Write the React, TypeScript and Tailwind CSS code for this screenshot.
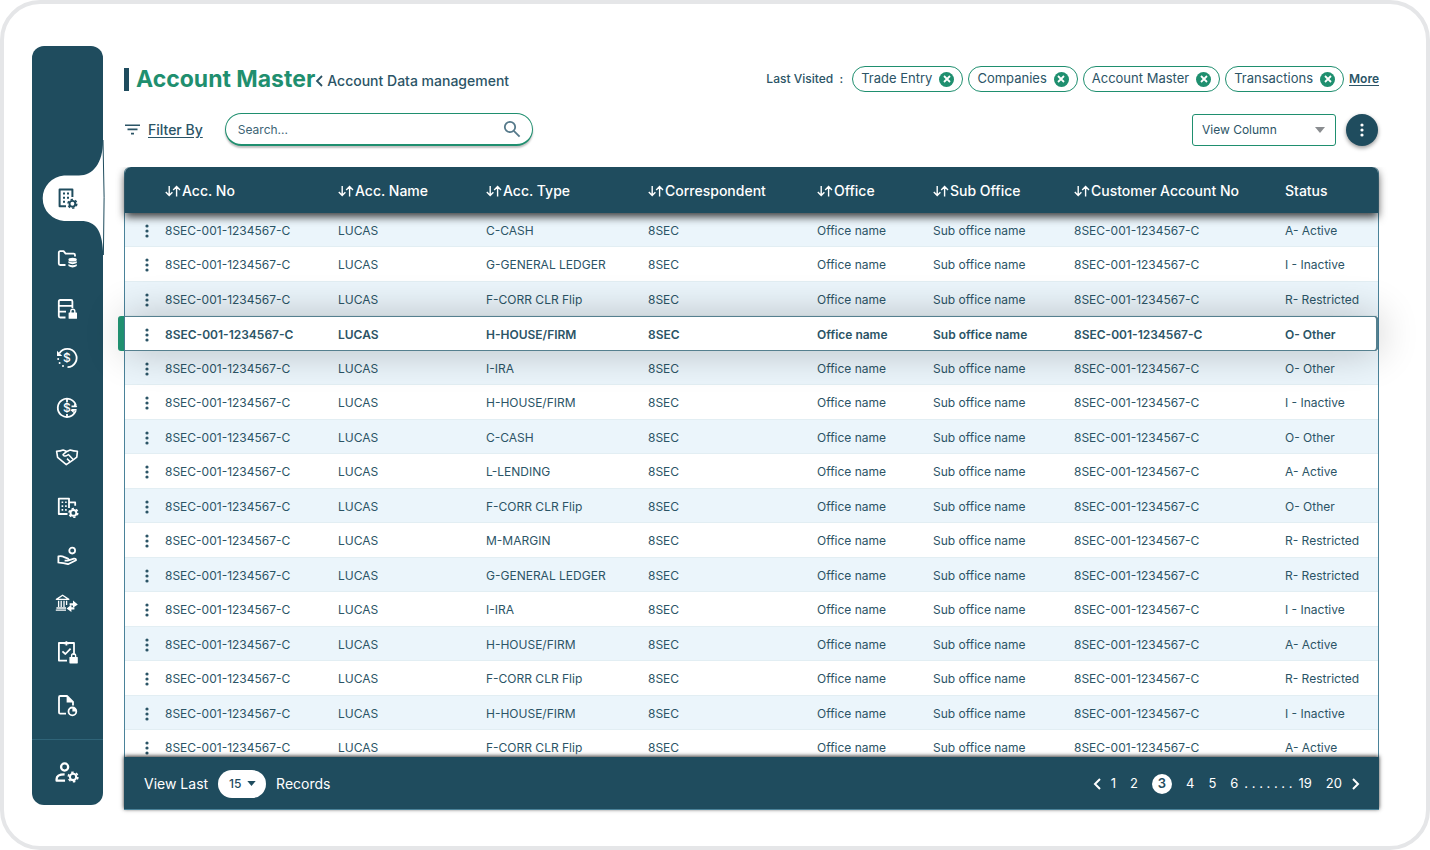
import { FC, ReactNode } from "react";
import clsx from "clsx";

interface IconProps {
  children: ReactNode;
  className?: string;
}

interface Account {
  type: string;
  status: string;
  selected?: boolean;
}

const accounts: Account[] = [
  { type: "C-CASH", status: "A- Active" },
  { type: "G-GENERAL LEDGER", status: "I - Inactive" },
  { type: "F-CORR CLR Flip", status: "R- Restricted" },
  { type: "H-HOUSE/FIRM", status: "O- Other", selected: true },
  { type: "I-IRA", status: "O- Other" },
  { type: "H-HOUSE/FIRM", status: "I - Inactive" },
  { type: "C-CASH", status: "O- Other" },
  { type: "L-LENDING", status: "A- Active" },
  { type: "F-CORR CLR Flip", status: "O- Other" },
  { type: "M-MARGIN", status: "R- Restricted" },
  { type: "G-GENERAL LEDGER", status: "R- Restricted" },
  { type: "I-IRA", status: "I - Inactive" },
  { type: "H-HOUSE/FIRM", status: "A- Active" },
  { type: "F-CORR CLR Flip", status: "R- Restricted" },
  { type: "H-HOUSE/FIRM", status: "I - Inactive" },
  { type: "F-CORR CLR Flip", status: "A- Active" },
];

const columns = [
  { label: "Acc. No", width: "w-[173px]" },
  { label: "Acc. Name", width: "w-[148px]" },
  { label: "Acc. Type", width: "w-[162px]" },
  { label: "Correspondent", width: "w-[169px]" },
  { label: "Office", width: "w-[116px]" },
  { label: "Sub Office", width: "w-[141px]" },
  { label: "Customer Account No", width: "w-[211px]" },
];

const visited = ["Trade Entry", "Companies", "Account Master", "Transactions"];

const Icon: FC<IconProps> = ({ children, className = "size-6" }) => (
  <svg
    viewBox="0 0 24 24"
    fill="none"
    stroke="currentColor"
    strokeWidth="1.8"
    strokeLinejoin="round"
    className={clsx("overflow-visible", className)}
    aria-hidden="true"
  >
    {children}
  </svg>
);

const Gear = ({ x, y }: { x: number; y: number }) => (
  <g transform={`translate(${x} ${y})`}>
    <circle r="2.9" strokeWidth="1.9" />
    <circle r="4.4" strokeWidth="1.5" strokeDasharray="2.3 2.308" />
  </g>
);

const Lock = ({ x, y }: { x: number; y: number }) => (
  <g transform={`translate(${x} ${y})`}>
    <rect width="8.4" height="6.4" rx="0.6" fill="currentColor" stroke="none" />
    <path d="M2.2 .5V-1.2a2 2 0 0 1 4 0V.5" strokeWidth="1.4" />
  </g>
);

const Dollar = () => (
  <text
    x="12"
    y="16.2"
    textAnchor="middle"
    fontSize="12"
    fontWeight="500"
    fill="currentColor"
    stroke="none"
  >
    $
  </text>
);

const menu: { label: string; icon: ReactNode }[] = [
  {
    label: "Documents",
    icon: (
      <>
        <path d="M10.5 18H5.2Q3.8 18 3.8 16.6V5.6Q3.8 4.2 5.2 4.2H8.6L10.6 6.6H18.6Q20 6.6 20 8V9.5" />
        <g fill="currentColor" stroke="none">
          <ellipse cx="17.6" cy="12.7" rx="4.2" ry="1.9" />
          <path d="M13.4 14.3q4.2 2 8.4 0v1.8q-4.2 2.2-8.4 0z" />
          <path d="M13.4 17.2q4.2 2 8.4 0v1.9q-4.2 2.6-8.4 0z" />
        </g>
      </>
    ),
  },
  {
    label: "Secured data",
    icon: (
      <>
        <path d="M10.5 20.5H5.2Q3.8 20.5 3.8 19.1V4.4Q3.8 3 5.2 3H16Q17.4 3 17.4 4.4V11M3.8 8.9H17.4M3.8 14.7H11" />
        <Lock x={13.6} y={15.4} />
      </>
    ),
  },
  {
    label: "History",
    icon: (
      <>
        <path d="M4.4 7.4A9.2 9.2 0 1 1 12.5 21.2" />
        <path d="M2 4.8V9.9H7.3z" fill="currentColor" stroke="none" />
        <g fill="currentColor" stroke="none">
          <circle cx="3.2" cy="13" r="1" />
          <circle cx="4.6" cy="17" r="1" />
          <circle cx="8" cy="20" r="1" />
        </g>
        <Dollar />
      </>
    ),
  },
  {
    label: "Exchange",
    icon: (
      <>
        <path d="M20.9 9.5A9.2 9.2 0 1 0 20.7 14.8" />
        <path d="M12 2.8V6M12 18V21.2M16.5 10.3H21.6M21.6 13.9H16.5" />
        <path
          d="M19 7.8L22.4 10.9H19zM18.8 12.9V17.2L15.4 13.9z"
          fill="currentColor"
          stroke="none"
        />
        <Dollar />
      </>
    ),
  },
  {
    label: "Partners",
    icon: (
      <>
        <path
          d="M1.6 6.2Q5.5 6.2 8.2 5L11.8 6.4 15.2 5Q18.5 6.2 22.4 6.2L21.8 12.2 18.2 14.8 11.3 19.6 2.6 12.4z"
          strokeWidth="1.6"
        />
        <path
          d="M11.8 6.4L8 9.6Q8.6 11.6 11.2 10.8L13.4 9.6 18.2 14.6M12 13.6L15 16.6"
          strokeWidth="1.5"
        />
      </>
    ),
  },
  {
    label: "Firm settings",
    icon: (
      <>
        <path d="M12.5 19H3.8V3.6H14V13M14 7.4H20.2V10.8" />
        <path
          d="M7.4 6.4V17M10.9 6.4V17"
          strokeWidth="1.6"
          strokeDasharray="1.7 2.1"
        />
        <Gear x={18.4} y={17.9} />
      </>
    ),
  },
  {
    label: "Payments",
    icon: (
      <>
        <circle cx="17.2" cy="6.6" r="2.9" />
        <path d="M3.4 19.2V12.4Q6.5 11.6 8.6 12.8L13 14.6Q14.6 16.2 12.6 16.6H9.6M12.6 16.6L19 14.6Q21.2 14.4 21 16.2L13 20.2Q7.5 18.4 3.4 18.6" />
      </>
    ),
  },
  {
    label: "Bank transfer",
    icon: (
      <g transform="translate(0 -3)">
        <path
          d="M1.4 8.4L7.6 4.2 13.8 8.4zM3.6 9.8V16M6.2 9.8V16M9 9.8V16M11.6 9.8V14M1.4 17H11M.8 19.2H11"
          strokeWidth="1.3"
        />
        <path
          d="M14.6 12.2H18V9.4L22.8 13.4 18 16.8V14.4H14.6zM19.4 16.2H16.4V13.8L11.6 17.4 16.4 21V18.6H19.4z"
          fill="currentColor"
          stroke="none"
        />
      </g>
    ),
  },
  {
    label: "Compliance",
    icon: (
      <g transform="translate(0 -4)">
        <path d="M12 21.6H3.9V4H19V16M11.4 2.2V6.4M8.8 4.4H14M7.4 12.4L10.4 15 15.6 9.6" />
        <Lock x={14.4} y={18} />
      </g>
    ),
  },
  {
    label: "Reports",
    icon: (
      <>
        <path d="M11 20.6H5.2Q4 20.6 4 19.4V4.2Q4 3 5.2 3H12L18 8.8V12.6" />
        <path d="M11.6 3L18.4 9.6H11.6z" fill="currentColor" stroke="none" />
        <circle cx="17.4" cy="18.4" r="3.9" />
        <path
          d="M17.4 14.4V18.4H21.4A4 4 0 0 0 17.4 14.4z"
          fill="currentColor"
          stroke="none"
        />
      </>
    ),
  },
];

const Dots = () => (
  <svg
    viewBox="0 0 4 14"
    fill="currentColor"
    className="h-3.5 w-1"
    aria-hidden="true"
  >
    <circle cx="2" cy="2" r="1.6" />
    <circle cx="2" cy="7" r="1.6" />
    <circle cx="2" cy="12" r="1.6" />
  </svg>
);

const SortIcon = () => (
  <svg
    viewBox="0 0 16 12"
    fill="none"
    stroke="currentColor"
    strokeWidth="1.4"
    className="h-3 w-4"
    aria-hidden="true"
  >
    <path d="M4.2 1V10.5M.8 7L4.2 10.6 7.4 7.2M11.6 11.5V1.5M8.2 5L11.6 1.4 15 5" />
  </svg>
);

const Caret = ({ className }: { className?: string }) => (
  <svg
    viewBox="0 0 10 6"
    fill="currentColor"
    className={clsx("pointer-events-none absolute", className)}
    aria-hidden="true"
  >
    <path d="M0 0H10L5 6z" />
  </svg>
);

const Sidebar = () => (
  <nav
    aria-label="Main"
    className="mb-[5px] flex w-[71px] shrink-0 flex-col rounded-xl bg-[#1f4c5e] text-white"
  >
    <button
      aria-label="Account Master"
      className="relative mt-[129px] ml-2 flex h-[46px] items-center pl-[15px] text-[#1f4c5e]"
    >
      <svg
        viewBox="0 0 65 118"
        className="absolute -top-9 left-0 h-[118px] w-[65px]"
        aria-hidden="true"
      >
        <path
          d="M63 2C63 24 53 36.5 39 36.5H24A22.8 22.8 0 0 0 24 82H41C56 82 62 92 63 112L64.4 60z"
          fill="white"
        />
        <path
          d="M63 1Q65 58 63.4 116"
          fill="none"
          stroke="#1f4c5e"
          strokeWidth="1"
        />
      </svg>
      <Icon className="relative size-6">
        <path d="M11 20.2H4.6V3.4H17.4V11" strokeWidth="2" />
        <path
          d="M9 6.6V17M13 6.6V14"
          strokeWidth="2"
          strokeDasharray="2 2.1"
        />
        <Gear x={17.4} y={17.8} />
      </Icon>
    </button>
    <div className="mt-[26px] mr-px mb-[22px] flex flex-1 flex-col items-center justify-between">
      {menu.map(({ label, icon }) => (
        <button key={label} aria-label={label}>
          <Icon>{icon}</Icon>
        </button>
      ))}
    </div>
    <button
      aria-label="User settings"
      className="flex h-[66px] items-center justify-center border-t border-[#2f6478] pr-0.5 pb-0.5"
    >
      <Icon className="size-[26px]">
        <circle cx="9.8" cy="7.4" r="3.3" strokeWidth="2.1" />
        <path d="M10.2 20H2.4V18.4Q2.4 14.2 9.8 14.2" strokeWidth="2.1" />
        <Gear x={17.6} y={16.6} />
      </Icon>
    </button>
  </nav>
);

const TitleBar = () => (
  <header className="flex flex-wrap items-center justify-between">
    <div className="flex items-center">
      <span className="h-[23px] w-[5px] bg-[#1f4c5e]" />
      <h1 className="ml-[7px] text-[23px] leading-6 font-bold text-[#1f8f6f]">
        Account Master
      </h1>
      <svg
        viewBox="0 0 8 12"
        fill="none"
        stroke="currentColor"
        strokeWidth="1.8"
        className="mt-1 h-3 w-2"
        aria-hidden="true"
      >
        <path d="M7 1L2 6 7 11" />
      </svg>
      <span className="mt-1 ml-1 text-sm leading-5 font-medium">
        Account Data management
      </span>
    </div>
    <div className="flex items-center gap-[5px] text-xs">
      <span className="mr-1 font-medium whitespace-pre">Last Visited  :</span>
      {visited.map((page) => (
        <span
          key={page}
          className="flex h-[26px] items-center gap-[7px] rounded-full border border-[#1f8f6f] px-2 text-[13px]"
        >
          {page}
          <button
            aria-label={`Remove ${page}`}
            className="flex size-[15px] items-center justify-center rounded-full bg-[#1f8f6f] text-white"
          >
            <svg
              viewBox="0 0 8 8"
              stroke="currentColor"
              strokeWidth="1.8"
              className="size-2"
              aria-hidden="true"
            >
              <path d="M1 1L7 7M7 1L1 7" />
            </svg>
          </button>
        </span>
      ))}
      <a href="#more" className="font-semibold underline underline-offset-2">
        More
      </a>
    </div>
  </header>
);

const Toolbar = () => (
  <div className="mt-[21px] flex items-center">
    <button className="ml-px flex items-center gap-2 text-sm font-medium">
      <svg
        viewBox="0 0 15 11"
        stroke="currentColor"
        strokeWidth="1.6"
        className="h-[11px] w-[15px]"
        aria-hidden="true"
      >
        <path d="M0 1.2H15M2.5 5.4H12.5M6 9.6H9" />
      </svg>
      <span className="underline underline-offset-2">Filter By</span>
    </button>
    <div className="relative ml-[22px] w-[308px]">
      <input
        type="text"
        aria-label="Search"
        placeholder="Search..."
        className="h-[33px] w-full rounded-full border border-b-2 border-[#1f8f6f] bg-white px-3 text-xs shadow-[0_2px_2px_rgba(0,0,0,0.25)] placeholder:text-[#3d6475]"
      />
      <svg
        viewBox="0 0 18 18"
        fill="none"
        stroke="currentColor"
        strokeWidth="1.8"
        className="absolute top-[7px] right-3 size-[18px] text-[#55798a]"
        aria-hidden="true"
      >
        <circle cx="7" cy="7" r="5.2" />
        <path d="M10.8 10.8L16.6 16.6" />
      </svg>
    </div>
    <div className="relative ml-auto">
      <select
        aria-label="View Column"
        className="h-8 w-36 appearance-none rounded-[3px] border border-[#1f8f6f] bg-white px-[9px] text-xs"
      >
        <option>View Column</option>
      </select>
      <Caret className="top-[13px] right-[11px] h-1.5 w-2.5 text-[#8a8d90]" />
    </div>
    <button
      aria-label="More actions"
      className="mr-px ml-2.5 flex size-8 items-center justify-center rounded-full bg-[#1f4c5e] text-white shadow-[0_2px_4px_rgba(0,0,0,0.4)]"
    >
      <Dots />
    </button>
  </div>
);

const AccountRow = ({ type, status, selected }: Account) => (
  <tr
    className={clsx(
      "odd:h-[34px] even:h-[35px] [&>td]:pt-0.5",
      selected
        ? "relative z-10 bg-[#1f4c5e] font-semibold shadow-[0_0_40px_rgba(0,0,0,0.24)] [&>td]:border-y [&>td]:border-[#55808f] [&>td]:bg-white"
        : "[&>td]:border-b [&>td]:border-[#e2eef3] odd:[&>td]:bg-[#ebf5fb]"
    )}
  >
    <td className="relative">
      {selected && (
        <span className="absolute -inset-y-px -left-[7px] w-1.5 rounded-l-[3px] bg-[#1f8f6f]" />
      )}
      <button aria-label="Row actions" className="ml-5 block">
        <Dots />
      </button>
    </td>
    <td>8SEC-001-1234567-C</td>
    <td>LUCAS</td>
    <td>{type}</td>
    <td>8SEC</td>
    <td>Office name</td>
    <td>Sub office name</td>
    <td>8SEC-001-1234567-C</td>
    <td className={clsx(selected && "rounded-r border-r-2")}>{status}</td>
  </tr>
);

const AccountTable = () => (
  <div className="min-h-0 flex-1 overflow-y-clip rounded-t-md border-x border-[#4a8299]">
    <table className="w-full table-fixed border-separate border-spacing-0 text-left text-xs whitespace-nowrap">
      <thead>
        <tr className="relative z-20 h-[46px] rounded-t-md text-sm text-white shadow-[0_4px_8px_rgba(0,0,0,0.75)] [&>th]:bg-[#1f4c5e] [&>th]:pt-0.5 [&>th]:font-medium">
          <th aria-label="Actions" className="w-10 rounded-tl-md" />
          {columns.map(({ label, width }) => (
            <th key={label} className={width}>
              <button className="flex items-center gap-px">
                <SortIcon />
                {label}
              </button>
            </th>
          ))}
          <th className="w-[93px] rounded-tr-md">Status</th>
        </tr>
      </thead>
      <tbody>
        {accounts.map((account, i) => (
          <AccountRow key={i} {...account} />
        ))}
      </tbody>
    </table>
  </div>
);

const Pagination = () => (
  <nav aria-label="Pages" className="flex items-center gap-[14px] text-[13px]">
    <button aria-label="Previous page" className="-mr-1">
      <svg
        viewBox="0 0 8 12"
        fill="none"
        stroke="currentColor"
        strokeWidth="2"
        className="h-3 w-2"
      >
        <path d="M7 1L2 6 7 11" />
      </svg>
    </button>
    <button>1</button>
    <button>2</button>
    <button
      aria-current="page"
      className="size-5 rounded-full bg-white font-semibold text-[#1f4c5e]"
    >
      3
    </button>
    <button>4</button>
    <button>5</button>
    <div className="flex items-center gap-1.5">
      <button>6</button>
      <span>. . . . . . .</span>
      <button>19</button>
    </div>
    <button>20</button>
    <button aria-label="Next page" className="-ml-1">
      <svg
        viewBox="0 0 8 12"
        fill="none"
        stroke="currentColor"
        strokeWidth="2"
        className="h-3 w-2"
      >
        <path d="M1 1L6 6 1 11" />
      </svg>
    </button>
  </nav>
);

const TableFooter = () => (
  <footer className="relative z-20 flex h-[53px] items-center justify-between border-b border-[#4a8299] bg-[#1f4c5e] pt-px pr-[19px] pl-5 text-sm text-white shadow-[0_-1px_4px_rgba(0,0,0,0.8)]">
    <div className="flex items-center gap-2.5">
      <label htmlFor="records">View Last</label>
      <div className="relative text-[#1f4c5e]">
        <select
          id="records"
          className="h-7 w-12 appearance-none rounded-full bg-white pl-[11px] text-xs font-medium"
        >
          <option>15</option>
        </select>
        <Caret className="top-[11px] right-2.5 h-[5px] w-[9px]" />
      </div>
      <span>Records</span>
    </div>
    <Pagination />
  </footer>
);

const App = () => (
  <div className="flex h-screen rounded-[40px] border-4 border-[#e5e6e8] bg-white pt-[42px] pr-[47px] pb-9 pl-7 font-[Inter,sans-serif] text-[#2b5466]">
    <Sidebar />
    <main className="ml-[21px] flex min-w-0 flex-1 flex-col pt-5">
      <TitleBar />
      <Toolbar />
      <section
        aria-label="Accounts"
        className="mt-[21px] flex min-h-0 flex-1 flex-col"
      >
        <AccountTable />
        <TableFooter />
      </section>
    </main>
  </div>
);

export default App;
